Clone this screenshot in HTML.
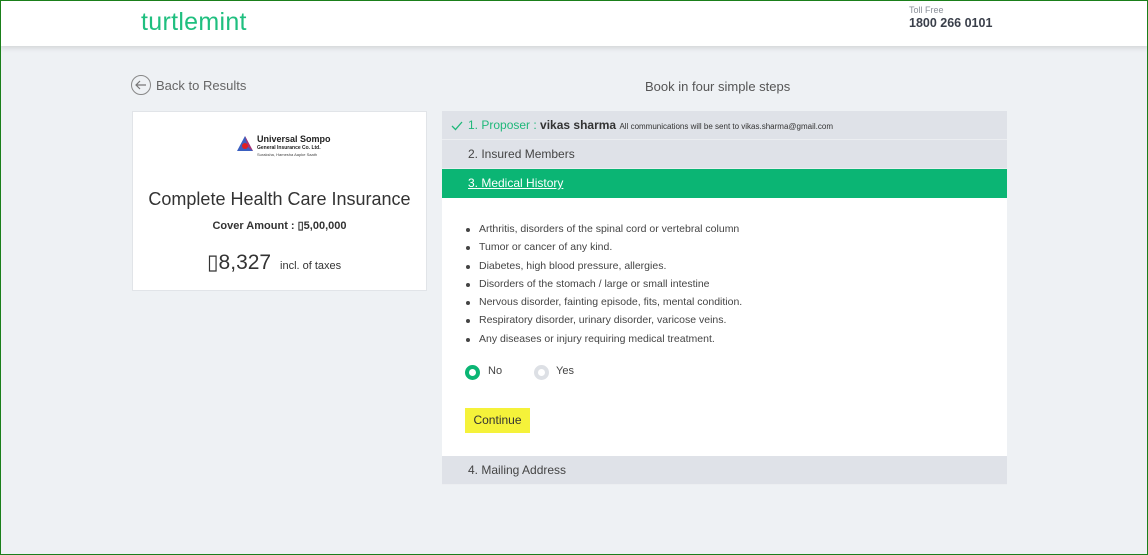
<!DOCTYPE html>
<html><head><meta charset="utf-8"><style>
*{box-sizing:border-box;margin:0;padding:0}
body{width:1148px;height:555px;overflow:hidden;background:#eef1f4;font-family:"Liberation Sans",sans-serif;color:#444;position:relative}
.frame{position:absolute;left:0;top:0;width:1148px;height:555px;border:1px solid #1a7f1a;z-index:10;pointer-events:none}
.hdr{position:absolute;left:0;top:0;width:1148px;height:46px;background:#fff;box-shadow:0 2px 5px rgba(0,0,0,.12)}
.logo{position:absolute;left:141px;top:8px;font-size:25px;color:#1fbf7f;letter-spacing:.3px}
.tf{position:absolute;left:909px;top:5px;font-size:9px;color:#8a8f99}
.ph{position:absolute;left:909px;top:16px;font-size:12.5px;font-weight:bold;color:#3a3f4a}
.back{position:absolute;left:131px;top:75px;font-size:13px;color:#666}
.back .c{position:absolute;left:0;top:0;width:20px;height:20px;border:1px solid #888;border-radius:50%}
.back span{position:absolute;left:25px;top:3px;white-space:nowrap}
.card{position:absolute;left:132px;top:111px;width:295px;height:180px;background:#fff;border:1px solid #e1e4e8}
.title{position:absolute;left:0;width:100%;text-align:center}
.steps{position:absolute;left:645px;top:79px;font-size:13px;color:#555}
.panel{position:absolute;left:442px;width:565px}
.row{height:29px;background:#dfe2e8;font-size:12px;padding-left:26px;line-height:29px;color:#444;border-bottom:1px solid #eceef1}
ul{position:absolute;left:466px;top:223px;font-size:10.5px;color:#444;list-style:none}
li{height:18.3px;padding-left:13px;position:relative}
li:before{content:"";position:absolute;left:0;top:5px;width:4px;height:4px;border-radius:50%;background:#444}
</style></head><body>
<div class="frame"></div>
<div class="hdr"><div class="logo">turtlemint</div><div class="tf">Toll Free</div><div class="ph">1800 266 0101</div></div>
<div class="back"><div class="c"><svg width="18" height="18" viewBox="0 0 18 18"><path d="M4 9H14M8 5L4 9L8 13" stroke="#777" fill="none" stroke-width="1.2"/></svg></div><span>Back to Results</span></div>
<div class="card">
<svg style="position:absolute;left:103px;top:23px" width="18" height="18" viewBox="0 0 18 18"><path d="M9 1L17 16H1Z" fill="#3a5fc0"/><path d="M9 1L17 16L12 12Z" fill="#b03070"/><circle cx="9" cy="11" r="3" fill="#e02020"/></svg>
<div style="position:absolute;left:124px;top:22px;font-size:9px;font-weight:bold;color:#222">Universal Sompo</div>
<div style="position:absolute;left:124px;top:33px;font-size:5px;font-weight:bold;color:#222">General Insurance Co. Ltd.</div>
<div style="position:absolute;left:124px;top:40px;font-size:4px;color:#444">Suraksha, Hamesha Aapke Saath</div>
<div class="title" style="top:77px;font-size:18px;color:#333">Complete Health Care Insurance</div>
<div class="title" style="top:107px;font-size:11px;font-weight:bold;color:#333">Cover Amount : ▯5,00,000</div>
<div style="position:absolute;left:74px;top:138px;font-size:21px;color:#333">▯8,327 <span style="font-size:11px">&nbsp;incl. of taxes</span></div>
</div>
<div class="steps">Book in four simple steps</div>
<div class="panel" style="top:111px">
<div class="row" style="color:#1fb87a;position:relative;font-size:12px"><svg style="position:absolute;left:9px;top:10px" width="12" height="10"><path d="M1 5L4.5 8.5L11 1" stroke="#1fb87a" fill="none" stroke-width="1.3"/></svg>1. Proposer : <b style="color:#333">vikas sharma</b> <span style="font-size:8px;color:#333">All communications will be sent to vikas.sharma@gmail.com</span></div>
<div class="row">2. Insured Members</div>
<div class="row" style="background:#0bb574;color:#fff;text-decoration:underline;border:0">3. Medical History</div>
<div style="height:258px;background:#fff"></div>
<div class="row">4. Mailing Address</div>
</div>
<ul>
<li>Arthritis, disorders of the spinal cord or vertebral column</li>
<li>Tumor or cancer of any kind.</li>
<li>Diabetes, high blood pressure, allergies.</li>
<li>Disorders of the stomach / large or small intestine</li>
<li>Nervous disorder, fainting episode, fits, mental condition.</li>
<li>Respiratory disorder, urinary disorder, varicose veins.</li>
<li>Any diseases or injury requiring medical treatment.</li>
</ul>
<div style="position:absolute;left:465px;top:365px;width:15px;height:15px;border-radius:50%;border:4px solid #0bb574"></div>
<div style="position:absolute;left:488px;top:365px;font-size:11px">No</div>
<div style="position:absolute;left:534px;top:365px;width:15px;height:15px;border-radius:50%;border:4px solid #dde0e5"></div>
<div style="position:absolute;left:556px;top:365px;font-size:11px">Yes</div>
<div style="position:absolute;left:465px;top:408px;width:65px;height:25px;background:#f5f23a;font-size:12px;line-height:25px;text-align:center;color:#333">Continue</div>
</body></html>
